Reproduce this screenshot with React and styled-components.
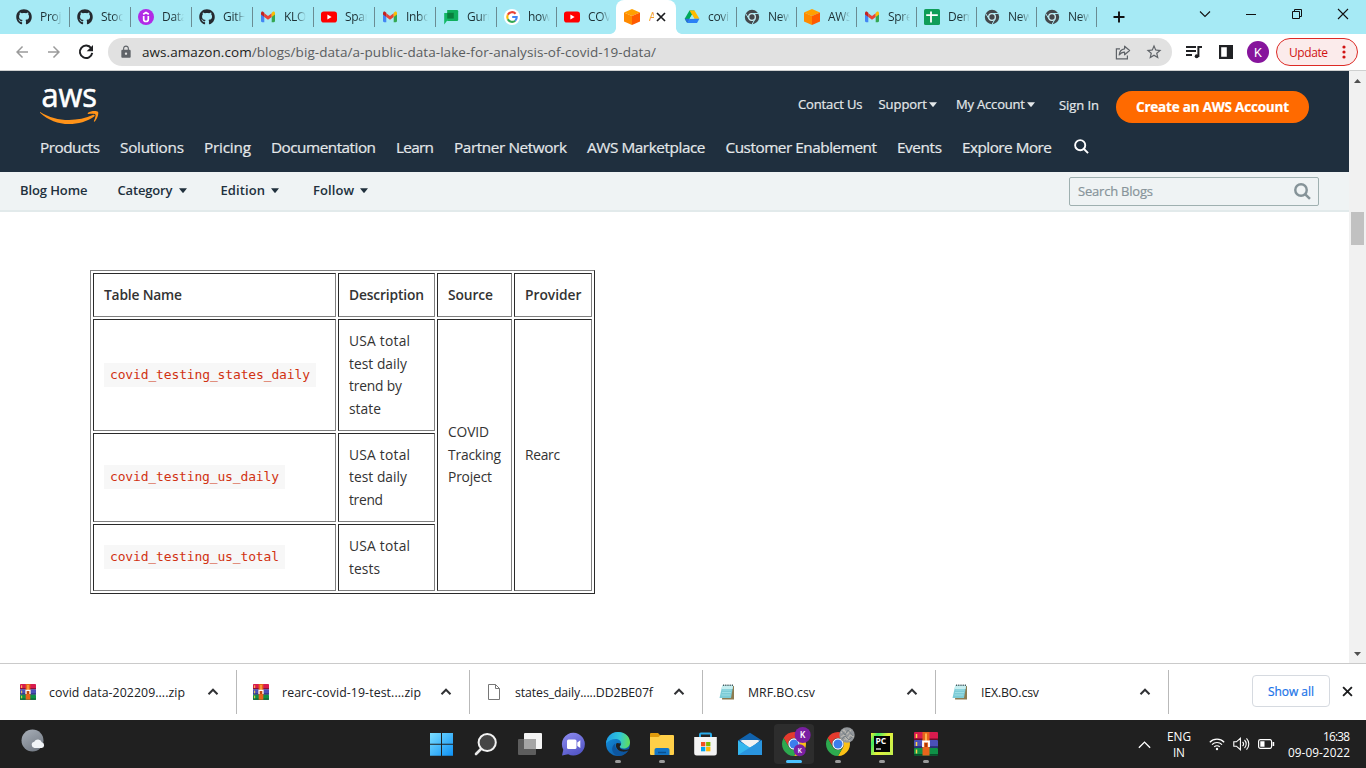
import React, { useLayoutEffect, useRef } from "react";
import styled, { createGlobalStyle } from "styled-components";
import { FaGithub } from "react-icons/fa";
import { MdArrowBack, MdArrowForward, MdLock, MdStarBorder } from "react-icons/md";

const Global = createGlobalStyle`
  * { box-sizing: border-box; }
  body { margin: 0; overflow: hidden; background: #fff; }
  svg { display: block; flex: none; }
`;

const UI = `"Open Sans", "Noto Sans", sans-serif`;

/* ---------- text that is tracked to a given measure ---------- */
const TextSpan = styled.span`
  display: inline-block;
  white-space: pre;
`;

function Fit({ w, children }) {
  const ref = useRef(null);
  useLayoutEffect(() => {
    const el = ref.current;
    el.style.letterSpacing = "0px";
    const natural = el.getBoundingClientRect().width;
    const n = el.textContent.length;
    const ls = (w - natural) / Math.max(1, n - 1);
    el.style.letterSpacing = `${ls}px`;
    el.style.marginRight = `${-ls}px`;
  }, [w, children]);
  return <TextSpan ref={ref}>{children}</TextSpan>;
}

/* ---------- window ---------- */
const Screen = styled.div`
  width: 1366px;
  height: 768px;
  display: flex;
  flex-direction: column;
  overflow: hidden;
  font-family: ${UI};
  color: #202124;
`;

const TabStrip = styled.div`
  height: 34px;
  flex: none;
  display: flex;
  background: #a6eaf5;
  padding-left: 8px;
`;

const Tab = styled.div`
  position: relative;
  flex: none;
  width: ${(p) => p.$w || 60}px;
  height: 34px;
  display: flex;
  align-items: center;
  padding-left: 8px;
  background: ${(p) => (p.$active ? "#fff" : "transparent")};
  border-radius: ${(p) => (p.$active ? "8px 8px 0 0" : "0")};
  ${(p) =>
    p.$divider &&
    `&::before {
      content: "";
      position: absolute;
      left: 0;
      top: 7px;
      width: 1px;
      height: 20px;
      background: #6a8c93;
    }`}
  ${(p) =>
    p.$active &&
    `&::before, &::after {
      content: "";
      position: absolute;
      bottom: 0;
      width: 6px;
      height: 6px;
    }
    &::before { left: -6px; background: radial-gradient(circle at 0 0, transparent 5.5px, #fff 6.2px); }
    &::after { right: -6px; background: radial-gradient(circle at 100% 0, transparent 5.5px, #fff 6.2px); }`}
`;

const StripEnd = styled.div`
  width: 1px;
  height: 20px;
  margin-top: 7px;
  background: #6a8c93;
`;

const TabTitle = styled.span`
  margin-left: ${(p) => (p.$short ? 9 : 8)}px;
  width: ${(p) => (p.$short ? 5 : 22)}px;
  overflow: hidden;
  white-space: pre;
  font-size: 12px;
  letter-spacing: -0.3px;
  line-height: 18px;
  color: ${(p) => (p.$short ? "#f29a2e" : "#1d3034")};
  mask-image: ${(p) => (p.$short ? "none" : "linear-gradient(90deg, #000 55%, transparent 100%)")};
`;

const TabClose = styled.svg`
  margin-left: 2px;
`;

const NewTab = styled.svg`
  align-self: center;
  margin-left: 15px;
`;

const WindowButtons = styled.div`
  margin-left: auto;
  display: flex;
  padding-top: 6px;
  svg { width: 46px; height: 16px; }
`;

const Toolbar = styled.div`
  height: 37px;
  flex: none;
  display: flex;
  align-items: center;
  border-bottom: 1px solid #cfd0d0;
  background: #fff;
  padding-left: 13px;
`;

const NavButtons = styled.div`
  display: flex;
  gap: 14px;
  width: 95px;
  svg { width: 18px; height: 18px; }
`;

const Omnibox = styled.div`
  width: 1064px;
  height: 28px;
  border-radius: 14px;
  background: #e1e1e1;
  display: flex;
  align-items: center;
  padding: 0 9px 0 11px;
  color: #5f6368;
`;

const Url = styled.div`
  margin-left: 9px;
  font-size: 13.5px;
  line-height: 20px;
  color: #5a5d60;
  b { font-weight: 400; color: #1d1e20; }
`;

const OmniboxActions = styled.div`
  margin-left: auto;
  display: flex;
  align-items: center;
  gap: 13px;
`;

const Avatar = styled.div`
  width: 22px;
  height: 22px;
  border-radius: 50%;
  background: #86149c;
  color: #fff;
  display: flex;
  align-items: center;
  justify-content: center;
  font: 400 12.5px Roboto, sans-serif;
`;

const ToolbarItem = styled.div`
  display: flex;
  align-items: center;
  margin-left: ${(p) => p.$left}px;
`;

const UpdateButton = styled.div`
  margin-left: 7px;
  width: 82px;
  height: 28px;
  border: 1px solid #dd2a25;
  border-radius: 14px;
  background: #fbebeb;
  color: #d01313;
  display: flex;
  align-items: center;
  padding-left: 12px;
  font-size: 12px;
  svg { margin-left: 14px; }
`;

/* ---------- page ---------- */
const Viewport = styled.div`
  height: 592px;
  flex: none;
  display: flex;
`;

const Page = styled.div`
  width: 1349px;
  height: 592px;
  background: #fff;
`;

const Scrollbar = styled.div`
  width: 17px;
  background: #f1f1f1;
  display: flex;
  flex-direction: column;
  align-items: center;
  padding: 8px 0 7px;
`;

const Thumb = styled.div`
  width: 13px;
  height: 33px;
  margin: 129px 0 auto;
  background: #c1c1c1;
`;

const SiteHeader = styled.header`
  height: 101px;
  background: #1f2f3e;
  color: #e4e8ea;
  display: flex;
  flex-direction: column;
`;

const HeaderTop = styled.div`
  height: 54px;
  flex: none;
  display: flex;
  padding: 16px 40px 0 40px;
`;

const AccountLinks = styled.div`
  margin-left: auto;
  display: flex;
  align-items: flex-start;
  font-size: 13px;
  -webkit-text-stroke: 0.2px;
  line-height: 18px;
`;

const AccountLink = styled.span`
  display: flex;
  align-items: center;
  gap: 2px;
  margin: ${(p) => p.$top || 8}px ${(p) => p.$right}px 0 0;
`;

const CreateButton = styled.div`
  width: 193px;
  height: 32px;
  margin-top: 4px;
  border-radius: 16px;
  background: #ff6a00;
  color: #fff;
  display: flex;
  align-items: center;
  justify-content: center;
  font-size: 13.5px;
  font-weight: 700;
`;

const MainNav = styled.nav`
  display: flex;
  align-items: center;
  gap: 20px;
  padding-left: 40px;
  height: 43px;
  font-size: 15.3px;
  -webkit-text-stroke: 0.2px;
  line-height: 22px;
`;

const SearchSlot = styled.span`
  margin-left: 2px;
`;

const SubNav = styled.div`
  height: 40px;
  background: #eff3f4;
  border-bottom: 2px solid #e2eaeb;
  display: flex;
  align-items: center;
  padding: 0 30px 0 20px;
  color: #21303d;
  font-size: 13px;
  font-weight: 600;
`;

const SubLink = styled.span`
  display: flex;
  align-items: center;
  gap: 6px;
  margin: 0 ${(p) => p.$right}px 2px 0;
`;

const SearchBox = styled.div`
  margin-left: auto;
  width: 250px;
  height: 29px;
  border: 1px solid #9fb0b0;
  border-radius: 2px;
  display: flex;
  align-items: center;
  justify-content: space-between;
  padding: 0 7px 0 8px;
  color: #87949a;
  font-size: 13px;
  font-weight: 400;
  -webkit-text-stroke: 0.2px;
`;

const DataTable = styled.table`
  margin: 58px 0 0 90px;
  width: 505px;
  height: 324px;
  table-layout: fixed;
  border: 1px solid;
  border-color: #808080 #2a2a2a #2a2a2a #808080;
  border-collapse: separate;
  border-spacing: 2px;
  font-size: 13.8px;
  line-height: 22.4px;
  color: #333;
`;

const Cell = styled.td`
  width: ${(p) => p.$w}px;
  height: ${(p) => p.$h}px;
  padding: 0 0 0 10px;
  text-align: left;
  vertical-align: middle;
  font-weight: ${(p) => (p.$head ? 600 : 400)};
  border: 1px solid;
  border-color: #2a2a2a #808080 #808080 #2a2a2a;
`;

const Line = styled.div`
  height: 22.5px;
`;

const Code = styled.code`
  display: block;
  width: fit-content;
  margin-bottom: 1px;
  background: #f7f7f7;
  color: #d13212;
  padding: 0 6px;
  height: 24px;
  line-height: 23px;
  font-family: "DejaVu Sans Mono", "Liberation Mono", monospace;
  font-size: 13px;
`;

/* ---------- downloads shelf ---------- */
const Shelf = styled.div`
  height: 57px;
  flex: none;
  border-top: 1px solid #cacaca;
  background: #fff;
  display: flex;
  align-items: center;
`;

const Download = styled.div`
  width: 233px;
  height: 44px;
  display: flex;
  align-items: center;
  padding-left: 20px;
  position: relative;
  &::after {
    content: "";
    position: absolute;
    right: -4px;
    top: 0;
    width: 1px;
    height: 44px;
    background: #b9b9b9;
  }
`;

const FileName = styled.span`
  margin-left: 13px;
  font-size: 12.3px;
  width: 158px;
  color: #202124;
`;

const ShowAll = styled.div`
  margin-left: 87px;
  margin-bottom: 2px;
  width: 78px;
  height: 32px;
  border: 1px solid #d6dae0;
  border-radius: 4px;
  color: #1a73e8;
  display: flex;
  align-items: center;
  justify-content: center;
  font-size: 12px;
  -webkit-text-stroke: 0.2px;
`;

const ShelfClose = styled.svg`
  margin: 0 0 2px 12px;
`;

/* ---------- taskbar ---------- */
const Taskbar = styled.div`
  height: 48px;
  flex: none;
  display: flex;
  background: #202020;
  color: #fff;
  padding: 0 16px 0 21px;
`;

const Weather = styled.div`
  width: 399px;
  padding-top: 8px;
`;

const AppButton = styled.div`
  width: 40px;
  height: 40px;
  margin: 4px 2px;
  border-radius: 4px;
  display: flex;
  flex-direction: column;
  align-items: center;
  padding-top: 8px;
  background: ${(p) => (p.$active ? "#2d2d2d" : "transparent")};
  svg { overflow: visible; }
  &::after {
    content: "";
    margin-top: 4px;
    width: ${(p) => (p.$active ? 16 : 6)}px;
    height: 3px;
    border-radius: 2px;
    background: ${(p) => (p.$active ? "#4cc2ff" : p.$running ? "#9a9a9a" : "transparent")};
  }
`;

const Tray = styled.div`
  margin-left: auto;
  display: flex;
  align-items: center;
`;

const TrayText = styled.div`
  display: flex;
  flex-direction: column;
  align-items: ${(p) => p.$align};
  margin-left: ${(p) => p.$left || 0}px;
  font-size: 11.8px;
  line-height: 16px;
`;

const TrayGlyphs = styled.div`
  display: flex;
  align-items: center;
  gap: 8px;
  margin: 0 13px 0 18px;
`;

/* ---------- icons ---------- */
const Github = () => <FaGithub size={16} color="#24292f" />;

const Udemy = () => (
  <svg width="16" height="16" viewBox="0 0 16 16">
    <circle cx="8" cy="8" r="8" fill="#b12ae6" />
    <path d="M5.2 5.3 8 3.5l2.8 1.8M5.7 7v3.2a2.3 2.3 0 0 0 4.6 0V7" fill="none" stroke="#fff" strokeWidth="1.7" />
  </svg>
);

const Gmail = () => (
  <svg width="16" height="16" viewBox="0 0 16 16">
    <path d="M1 4.4 4.3 7v6.2H2.1A1.1 1.1 0 0 1 1 12.1z" fill="#4285f4" />
    <path d="M15 4.4 11.7 7v6.2h2.2a1.1 1.1 0 0 0 1.1-1.1z" fill="#34a853" />
    <path d="M4.3 4.3 8 7.1l3.7-2.8V8L8 10.8 4.3 8z" fill="#ea4335" />
    <path d="M1 4.2c0-1.5 1.4-2 2.4-1.2l.9.8V8L1 5.6z" fill="#c5221f" />
    <path d="M15 4.2c0-1.5-1.4-2-2.4-1.2l-.9.8V8L15 5.6z" fill="#fbbc04" />
  </svg>
);

const Youtube = () => (
  <svg width="16" height="16" viewBox="0 0 16 16">
    <rect y="2.4" width="16" height="11.2" rx="2.8" fill="#f00" />
    <path d="m6.4 5.6 4.2 2.4-4.2 2.4z" fill="#fff" />
  </svg>
);

const Chat = () => (
  <svg width="16" height="16" viewBox="0 0 16 16">
    <path d="M4.2 1H14a1.2 1.2 0 0 1 1.2 1.2v8.6A1.2 1.2 0 0 1 14 12H4.2z" fill="#0fae5c" />
    <path d="M1.2 4H11v6.8H4.8L1.2 15.4z" fill="#12b866" />
    <path d="M4.2 3.8h6.6v5.8H4.2z" fill="#087f3e" />
  </svg>
);

const Google = () => (
  <svg width="16" height="16" viewBox="0 0 16 16">
    <circle cx="8" cy="8" r="8" fill="#fff" />
    <g fill="none" strokeWidth="2.1">
      <path d="M11.6 4.7A4.8 4.8 0 0 0 3.8 5.8" stroke="#ea4335" />
      <path d="M3.8 5.8a4.9 4.9 0 0 0 0 4.4" stroke="#fbbc05" />
      <path d="M3.8 10.2a4.8 4.8 0 0 0 7.4 1.5" stroke="#34a853" />
      <path d="M11.2 11.7A4.6 4.6 0 0 0 12.7 8H8.2" stroke="#4285f4" />
    </g>
  </svg>
);

const AwsCube = () => (
  <svg width="16" height="16" viewBox="0 0 16 16">
    <path d="m8 0 8 3.5L8 7 0 3.5z" fill="#ffa000" />
    <path d="M0 3.5 8 7v9l-8-3.6z" fill="#ff8a00" />
    <path d="M16 3.5 8 7v9l8-3.6z" fill="#ff5a00" />
  </svg>
);

const Drive = () => (
  <svg width="16" height="16" viewBox="0 0 16 16">
    <path d="M5.5 1.5h5L8 5.8 3.2 14 .7 9.8z" fill="#00a85a" />
    <path d="M5.5 1.5h5l4.9 8.3h-5z" fill="#ffba00" />
    <path d="M5.6 9.8h9.8L13 14H3.2z" fill="#2a80f5" />
    <path d="M.7 9.8h4.9L3.2 14z" fill="#2a6be0" />
    <path d="M8 5.8 10.4 9.8H5.6z" fill="#a6eaf5" />
  </svg>
);

const ChromeDark = () => (
  <svg width="16" height="16" viewBox="0 0 48 48">
    <circle cx="24" cy="24" r="21.5" fill="#43484c" />
    <circle cx="24" cy="24" r="10" fill="none" stroke="#cfeef3" strokeWidth="4" />
    <path d="M24 13.5h19M14.5 29.5 5.5 14M33.5 29.5 24 46" stroke="#a6eaf5" strokeWidth="3" />
  </svg>
);

const Sheet = () => (
  <svg width="16" height="16" viewBox="0 0 16 16">
    <rect width="16" height="16" rx="1.6" fill="#0f9d58" />
    <path d="M2.2 6.2h11.6M7 2.6v11" stroke="#fff" strokeWidth="1.8" />
  </svg>
);

const Reload = () => (
  <svg viewBox="0 0 18 18">
    <path d="M14.2 5.3A6.2 6.2 0 1 0 15.2 9.8" fill="none" stroke="#202124" strokeWidth="2" />
    <path d="M16 2v6.3H9.7z" fill="#202124" />
  </svg>
);

const Cross = ({ as: Tag = "svg", size }) => (
  <Tag width={size} height={size} viewBox="0 0 10 10" fill="none" stroke="#1b1c1e" strokeWidth="1.7">
    <path d="m1 1 8 8M9 1 1 9" />
  </Tag>
);

const Share = () => (
  <svg width="18" height="18" viewBox="0 0 18 18" fill="none" stroke="#5f6368" strokeWidth="1.2">
    <path d="M6 5.8H2.4v10h11v-3.2" />
    <path d="M10.6 3.2v2.6C7 6.3 5.4 8.8 5.2 12c1.4-2 3-2.8 5.4-2.8v2.6l5-4.3z" strokeLinejoin="round" />
  </svg>
);

const MediaQueue = () => (
  <svg width="18" height="16" viewBox="0 0 18 16" fill="none" stroke="#202124" strokeWidth="2">
    <path d="M1 3h10M1 7h10M1 11h6M13.4 13V3H17" />
    <circle cx="11.7" cy="12.3" r="2" fill="#202124" stroke="none" />
  </svg>
);

const SidePanel = () => (
  <svg width="14" height="14" viewBox="0 0 14 14">
    <path d="M0 0h14v14H0zM2.2 2.2v9.6h5.6V2.2z" fill="#202124" fillRule="evenodd" />
  </svg>
);

const Dots = () => (
  <svg width="4" height="14" viewBox="0 0 4 14" fill="#d01313">
    <circle cx="2" cy="2" r="1.6" />
    <circle cx="2" cy="7" r="1.6" />
    <circle cx="2" cy="12" r="1.6" />
  </svg>
);

const Caret = ({ w = 8, color = "currentColor" }) => (
  <svg width={w} height="5" viewBox="0 0 8 5">
    <path d="M0 .3h8L4.6 4.6a.8.8 0 0 1-1.2 0z" fill={color} />
  </svg>
);

const Magnifier = ({ size, color, sw = 2 }) => (
  <svg width={size} height={size} viewBox="0 0 16 16" fill="none" stroke={color} strokeWidth={sw}>
    <circle cx="6.6" cy="6.6" r="5.4" />
    <path d="m10.4 10.4 4.6 4.6" />
  </svg>
);

const AwsLogo = () => (
  <svg width="60" height="38" viewBox="0 0 60 38">
    <text x="1.5" y="20" textLength="55.5" lengthAdjust="spacingAndGlyphs" fontFamily="Open Sans, Noto Sans, sans-serif" fontSize="32" fill="#fff" stroke="#fff" strokeWidth=".6">aws</text>
    <path d="M.2 24.9C9 30.3 18.5 33 29 33c8 0 17-1.8 24.3-5.2 1.1-.5 2 .8.9 1.6C47.5 34.3 38 37 29 37 18 37 8 32.8.3 25.9c-.5-.6-.4-1.2-.1-1z" fill="#ff9319" />
    <path d="M48 25.7c2.4-1.9 8.5-2.5 10-.9 1 1.4-.6 7.2-3.3 9.7-.5.4-1 .2-.8-.4.8-1.9 2.2-5.6 1.5-6.6-.8-1-4.9-.7-6.9-.5-.8.1-1.1-.8-.5-1.3z" fill="#ff9319" />
  </svg>
);

/* stacked books held by a strap */
const WinrarFile = ({ size }) => (
  <svg width={size} height={size} viewBox="0 0 24 24">
    <rect x="0" y="0" width="24" height="8" rx="1" fill="#d81b4e" />
    <rect x="0" y="6.5" width="24" height="1.5" fill="#6d0d2b" />
    <rect x="0" y="8" width="24" height="8" rx="1" fill="#4b50b8" />
    <rect x="0" y="14.3" width="24" height="1.5" fill="#222a63" />
    <rect x="0" y="16" width="24" height="7.5" rx="1" fill="#0f9146" />
    <rect x="0" y="22" width="24" height="1.5" fill="#07502a" />
    <path d="M2.5 2v4M2.5 10v4M2.5 17.5v4" stroke="#ffd34d" strokeWidth="1.5" />
    <rect x="8.5" y="0" width="7" height="23.5" fill="#e8641b" />
    <path d="M12 1.5v8" stroke="#ffb24a" strokeWidth="2" />
    <path d="M9 15V9.500h6V15" fill="none" stroke="#fff" strokeWidth="1.8" />
    <path d="M12 11v4" stroke="#a8380b" strokeWidth="2" />
  </svg>
);

const BlankFile = () => (
  <svg width="16" height="16" viewBox="0 0 16 16">
    <path d="M2.5.5h7l4 4v11h-11zM9.5.5v4h4" fill="#fff" stroke="#777" />
  </svg>
);

const Notepad = () => (
  <svg width="16" height="16" viewBox="0 0 16 16">
    <path d="M4 2h11v13.5H3z" fill="#8c7b50" />
    <path d="M3.3 1.5h10.900L12 14H.5z" fill="#7ccbd6" />
    <path d="M3.3 1.5h10.900l-.6 3.500H2.500z" fill="#c5eef0" />
    <path d="M3.5 6h9M3 8.500h9M2.500 11h9" stroke="#a6e2e8" strokeWidth=".8" />
    <path d="M4 1.2h10" stroke="#45595c" strokeWidth="1.6" strokeDasharray="1.2 1" />
  </svg>
);

const ChevronUp = ({ size = 12, color = "#303134", sw = 2 }) => (
  <svg width={size} height={size * 0.6} viewBox="0 0 12 7.2" fill="none" stroke={color} strokeWidth={sw}>
    <path d="m1.5 6.2 4.5-4.5 4.5 4.5" />
  </svg>
);

const WeatherIcon = () => (
  <svg width="26" height="26" viewBox="0 0 26 26">
    <defs>
      <linearGradient id="moon" x1="0" y1="0" x2=".6" y2="1">
        <stop offset="0" stopColor="#a9b0b9" />
        <stop offset="1" stopColor="#767d87" />
      </linearGradient>
    </defs>
    <circle cx="11.5" cy="12.5" r="11" fill="url(#moon)" />
    <path d="M13.5 20a3.2 3.2 0 0 1-.3-6.3 4.2 4.2 0 0 1 7.6.6A2.9 2.9 0 0 1 20.7 20z" fill="#f1f4f7" />
  </svg>
);

const Start = () => (
  <svg width="24" height="24" viewBox="0 0 24 24">
    <defs>
      <linearGradient id="win" gradientUnits="userSpaceOnUse" x1="0" y1="0" x2="24" y2="24">
        <stop offset="0" stopColor="#7fe0ff" />
        <stop offset="1" stopColor="#0a8ff5" />
      </linearGradient>
    </defs>
    <path d="M0 1h11v10.8H0zM12 1h11v10.8H12zM0 12.8h11v10.900H0zM12 12.8h11v10.900H12z" fill="url(#win)" />
  </svg>
);

const TaskSearch = () => (
  <svg width="24" height="24" viewBox="0 0 24 24">
    <path d="m7.5 16.5-5.5 5.5" stroke="#e8e8e8" strokeWidth="2.6" strokeLinecap="round" />
    <circle cx="13.2" cy="10.5" r="8.6" fill="#454545" stroke="#f2f2f2" strokeWidth="2" />
  </svg>
);

const TaskView = () => (
  <svg width="24" height="24" viewBox="0 0 24 24">
    <rect x="6" y="1" width="18" height="16" rx="1" fill="#f4f4f4" />
    <rect x="0" y="7" width="18" height="16" rx="1" fill="#5d5d5d" />
    <rect x="6" y="7" width="12" height="10" fill="#a5a5a5" />
  </svg>
);

const TeamsChat = () => (
  <svg width="24" height="24" viewBox="0 0 24 24">
    <defs>
      <linearGradient id="chat" x1="0" y1="0" x2=".5" y2="1">
        <stop offset="0" stopColor="#8f8cf0" />
        <stop offset="1" stopColor="#5558c8" />
      </linearGradient>
    </defs>
    <path d="M11.5.8a11.4 11.4 0 1 1-5.3 21.5L0 23.5l1.3-5.8A11.4 11.4 0 0 1 11.5.8z" fill="url(#chat)" />
    <rect x="5" y="7.5" width="9.5" height="9.5" rx="1.5" fill="#fff" />
    <path d="m15.3 10.5 3-2.2v7.8l-3-2.2z" fill="#fff" />
  </svg>
);

const Edge = () => (
  <svg width="24" height="24" viewBox="0 0 24 24">
    <defs>
      <linearGradient id="edgeTop" x1="0" y1=".4" x2="1" y2=".5">
        <stop offset="0" stopColor="#1e9de8" />
        <stop offset=".55" stopColor="#2fc6d9" />
        <stop offset="1" stopColor="#62df57" />
      </linearGradient>
      <linearGradient id="edgeLow" x1="0" y1="0" x2="1" y2="1">
        <stop offset="0" stopColor="#1494e0" />
        <stop offset="1" stopColor="#0c4f9e" />
      </linearGradient>
    </defs>
    <circle cx="12" cy="12" r="12" fill="url(#edgeLow)" />
    <path d="M0 11.5C.6 4.8 5.7 0 12 0c7 0 12 4.7 12 10.2 0 3.8-2.7 6.3-6.2 6.3-2.6 0-4-.9-4-1.9 0-.7 1.4-1.1 1.4-3.2 0-2.5-2.4-4.500-5.700-4.500C5.8 6.9 2 8.700 0 11.500z" fill="url(#edgeTop)" />
    <path d="M9.3 11.6c-1.2 6.7 6 10.7 13 6.5C20.5 21.7 17 24 12.5 24 5 22.5 4.5 14.5 9.3 11.6z" fill="#0d569f" />
    <path d="M10.8 11c-2 2.6-.6 7.5 5.2 8.6 2.6.4 5-.4 6.8-1.5.5-.3.2-.9-.3-.8-5.5 1.4-8.800-.4-8.800-2.600 0-.7 1.100-1.300 1.100-3.100" fill="#202020" />
  </svg>
);

const Folder = () => (
  <svg width="24" height="24" viewBox="0 0 24 24">
    <path d="M0 2a1 1 0 0 1 1-1h7l2.5 2.5H20v4H0z" fill="#e09b0c" />
    <path d="M0 5h8.5L10.6 3H23a1 1 0 0 1 1 1v18a1 1 0 0 1-1 1H1a1 1 0 0 1-1-1z" fill="#ffcf48" />
    <path d="M4.5 23v-5a2 2 0 0 1 2-2h11a2 2 0 0 1 2 2v5z" fill="#1275c6" />
    <path d="M8 20.5h8" stroke="#0a4f8e" strokeWidth="1.5" />
  </svg>
);

const Store = () => (
  <svg width="24" height="24" viewBox="0 0 24 24">
    <path d="M6 7V2.5a1 1 0 0 1 1-1h9a1 1 0 0 1 1 1V7" fill="none" stroke="#27a9e8" strokeWidth="2" />
    <path d="M.2 5h22.6v16a2.5 2.5 0 0 1-2.5 2.5H2.7A2.5 2.5 0 0 1 .2 21z" fill="#f3f3f3" />
    <path d="M7 10h4.3v4.3H7z" fill="#f25022" />
    <path d="M12.1 10h4.3v4.3h-4.3z" fill="#7fba00" />
    <path d="M7 15h4.3v4.3H7z" fill="#00a4ef" />
    <path d="M12.1 15h4.3v4.3h-4.3z" fill="#ffb900" />
  </svg>
);

const Mail = () => (
  <svg width="24" height="24" viewBox="0 0 24 24">
    <path d="M0 8.5 12 .8l12 7.7v7H0z" fill="#1062ac" />
    <path d="M2 8.5h20l-10 8z" fill="#f2f2f2" />
    <path d="M0 8.5l12 7 12-7V23H0z" fill="#35b7ee" />
    <path d="M0 23l12-7.5L24 8.5V23z" fill="#2a95df" />
    <path d="M3 8h18l-9 6.6z" fill="#f2f2f2" />
  </svg>
);

const ChromeParts = () => (
  <>
    <path d="M1.61 6A12 12 0 0 1 22.39 6H12A6 6 0 0 0 6.8 15z" fill="#e33b2e" />
    <path d="M22.39 6A12 12 0 0 1 12 24L17.2 15A6 6 0 0 0 12 6z" fill="#fbc116" />
    <path d="M12 24A12 12 0 0 1 1.61 6L6.8 15A6 6 0 0 0 17.2 15z" fill="#2da94f" />
    <circle cx="12" cy="12" r="5.7" fill="#fff" />
    <circle cx="12" cy="12" r="4.5" fill="#3b7ded" />
  </>
);

const ChromeProfile = () => (
  <svg width="24" height="24" viewBox="0 0 24 24" fontFamily="Roboto, sans-serif" fontWeight="500" fill="#fff" textAnchor="middle">
    <ChromeParts />
    <circle cx="20.7" cy="3" r="8" fill="#7a1fa2" />
    <text x="20.7" y="6" fontSize="8.5">K</text>
    <circle cx="17.7" cy="18.2" r="6" fill="#7a1fa2" />
    <text x="17.7" y="20.7" fontSize="6.5">K</text>
  </svg>
);

const ChromeGuest = () => (
  <svg width="24" height="24" viewBox="0 0 24 24">
    <ChromeParts />
    <circle cx="21" cy="3" r="7.7" fill="#92969a" />
    <path d="m15 1 3-3 3 4 4-4M15 5l3-2 3 5 3-5 4 2M18 8l3-2 3 3" fill="none" stroke="#b9b7b1" strokeWidth="1.2" />
    <path d="m16-1 3 4 3-5 5 6M16 7l3-3 4 4 3-3" fill="none" stroke="#70797e" strokeWidth=".8" />
  </svg>
);

const PyCharm = () => (
  <svg width="24" height="24" viewBox="0 0 24 24">
    <defs>
      <linearGradient id="py" x1="0" y1="0" x2="1" y2=".6">
        <stop offset="0" stopColor="#f4ef2e" />
        <stop offset=".25" stopColor="#3dea62" />
        <stop offset=".6" stopColor="#e6f23a" />
        <stop offset="1" stopColor="#c8f04c" />
      </linearGradient>
    </defs>
    <rect x="1" y="1" width="22" height="22" fill="url(#py)" />
    <rect x="4" y="4" width="16" height="16" fill="#050505" />
    <text x="5.5" y="12" fontFamily="Open Sans, sans-serif" fontWeight="700" fontSize="8.5" fill="#fff">PC</text>
    <path d="M6 17h5" stroke="#fff" strokeWidth="1.2" />
  </svg>
);

const Wifi = () => (
  <svg width="16" height="14" viewBox="0 0 16 14" fill="none" stroke="#fff" strokeWidth="1.2">
    <path d="M.8 5.2a10.2 10.2 0 0 1 14.4 0M3 7.6a7 7 0 0 1 10 0M5.2 9.9a4 4 0 0 1 5.6 0" />
    <circle cx="8" cy="12" r="1.2" fill="#fff" stroke="none" />
  </svg>
);

const Speaker = () => (
  <svg width="17" height="14" viewBox="0 0 17 14" fill="none" stroke="#fff" strokeWidth="1.1">
    <path d="M.8 4.8h2.6L7.4 1.3v11.4L3.4 9.2H.8zM9.6 4.8a3.2 3.2 0 0 1 0 4.4M11.5 3a5.6 5.6 0 0 1 0 8M13.5 1.3a8.2 8.2 0 0 1 0 11.4" />
  </svg>
);

const Battery = () => (
  <svg width="17" height="12" viewBox="0 0 17 12">
    <rect x=".6" y="1.6" width="13" height="8.8" rx="1.8" fill="none" stroke="#fff" strokeWidth="1.2" />
    <path d="M2.3 3.3h4.2v5.4H2.3zM14.6 4h1.6v4h-1.6z" fill="#fff" />
  </svg>
);

/* ---------- data ---------- */
const tabs = [
  { icon: Github, title: "Proj", w: 61 },
  { icon: Github, title: "Stoc", w: 61 },
  { icon: Udemy, title: "Data", w: 61 },
  { icon: Github, title: "GitH", w: 61 },
  { icon: Gmail, title: "KLO", w: 61 },
  { icon: Youtube, title: "Spar", w: 61 },
  { icon: Gmail, title: "Inbo", w: 61 },
  { icon: Chat, title: "Guru", w: 61 },
  { icon: Google, title: "how" },
  { icon: Youtube, title: "COV" },
  { icon: AwsCube, title: "A", active: true },
  { icon: Drive, title: "covi" },
  { icon: ChromeDark, title: "New" },
  { icon: AwsCube, title: "AWS" },
  { icon: Gmail, title: "Spre" },
  { icon: Sheet, title: "Dem" },
  { icon: ChromeDark, title: "New" },
  { icon: ChromeDark, title: "New" },
];

const navItems = [
  ["Products", 60], ["Solutions", 64], ["Pricing", 47], ["Documentation", 105], ["Learn", 38],
  ["Partner Network", 113], ["AWS Marketplace", 118.5], ["Customer Enablement", 151.5], ["Events", 45], ["Explore More", 90],
];

const downloads = [
  [WinrarFile, "covid data-202209....zip", 136],
  [WinrarFile, "rearc-covid-19-test....zip", 139],
  [BlankFile, "states_daily.....DD2BE07f", 138],
  [Notepad, "MRF.BO.csv", 67],
  [Notepad, "IEX.BO.csv", 58],
];

const apps = [
  { icon: Start }, { icon: TaskSearch }, { icon: TaskView }, { icon: TeamsChat },
  { icon: Edge, running: true }, { icon: Folder, running: true }, { icon: Store }, { icon: Mail },
  { icon: ChromeProfile, active: true }, { icon: ChromeGuest, running: true },
  { icon: PyCharm, running: true }, { icon: WinrarFile, running: true },
];

const Lines = ({ items }) => items.map(([t, w]) => <Line key={t}><Fit w={w}>{t}</Fit></Line>);

export default function App() {
  return (
    <Screen>
      <Global />
      <TabStrip>
        {tabs.map(({ icon: Icon, title, w, active }, i) => (
          <Tab key={i} $w={w} $active={active} $divider={i > 0 && !active && !tabs[i - 1].active}>
            <Icon />
            <TabTitle $short={active}>{title}</TabTitle>
            {active && <Cross as={TabClose} size={10} />}
          </Tab>
        ))}
        <StripEnd />
        <NewTab width="14" height="14" viewBox="0 0 14 14"><path d="M7 1.5v11M1.5 7h11" stroke="#111" strokeWidth="1.9" /></NewTab>
        <WindowButtons>
          <svg viewBox="0 0 46 16" fill="none" stroke="#111" strokeWidth="1.1"><path d="m18 5.5 5 5 5-5" /></svg>
          <svg viewBox="0 0 46 16" fill="none" stroke="#111"><path d="M18 8.5h10" /></svg>
          <svg viewBox="0 0 46 16" fill="none" stroke="#111"><path d="M18.5 5.5h7v7h-7zM20.5 5.5v-2h7v7h-2" /></svg>
          <svg viewBox="0 0 46 16" fill="none" stroke="#111" strokeWidth="1.1"><path d="m18 3 10 10M28 3 18 13" /></svg>
        </WindowButtons>
      </TabStrip>

      <Toolbar>
        <NavButtons>
          <MdArrowBack color="#9b9b9b" />
          <MdArrowForward color="#9b9b9b" />
          <Reload />
        </NavButtons>
        <Omnibox>
          <MdLock size={14} />
          <Url><Fit w={514}><b>aws.amazon.com</b>/blogs/big-data/a-public-data-lake-for-analysis-of-covid-19-data/</Fit></Url>
          <OmniboxActions>
            <Share />
            <MdStarBorder size={18} />
          </OmniboxActions>
        </Omnibox>
        <ToolbarItem $left={13}><MediaQueue /></ToolbarItem>
        <ToolbarItem $left={16}><SidePanel /></ToolbarItem>
        <ToolbarItem $left={14}><Avatar>K</Avatar></ToolbarItem>
        <UpdateButton><Fit w={39}>Update</Fit><Dots /></UpdateButton>
      </Toolbar>

      <Viewport>
        <Page>
          <SiteHeader>
            <HeaderTop>
              <AwsLogo />
              <AccountLinks>
                <AccountLink $right={16}><Fit w={64.5}>Contact Us</Fit></AccountLink>
                <AccountLink $right={19}><Fit w={48.5}>Support</Fit><Caret /></AccountLink>
                <AccountLink $right={24}><Fit w={69}>My Account</Fit><Caret /></AccountLink>
                <AccountLink $right={17} $top={9}><Fit w={40}>Sign In</Fit></AccountLink>
                <CreateButton><Fit w={153}>Create an AWS Account</Fit></CreateButton>
              </AccountLinks>
            </HeaderTop>
            <MainNav>
              {navItems.map(([t, w]) => <Fit key={t} w={w}>{t}</Fit>)}
              <SearchSlot><Magnifier size={15} color="#fff" /></SearchSlot>
            </MainNav>
          </SiteHeader>
          <SubNav>
            <SubLink $right={30}><Fit w={67.5}>Blog Home</Fit></SubLink>
            <SubLink $right={34}><Fit w={55}>Category</Fit><Caret /></SubLink>
            <SubLink $right={34}><Fit w={44.5}>Edition</Fit><Caret /></SubLink>
            <SubLink $right={0}><Fit w={41}>Follow</Fit><Caret /></SubLink>
            <SearchBox><Fit w={75}>Search Blogs</Fit><Magnifier size={17} color="#859398" sw={2.3} /></SearchBox>
          </SubNav>

          <DataTable>
            <tbody>
              <tr>
                <Cell as="th" $head $w={243} $h={44}><Fit w={78}>Table Name</Fit></Cell>
                <Cell as="th" $head $w={97} $h={44}><Fit w={75}>Description</Fit></Cell>
                <Cell as="th" $head $w={75} $h={44}><Fit w={45}>Source</Fit></Cell>
                <Cell as="th" $head $w={78} $h={44}><Fit w={56.5}>Provider</Fit></Cell>
              </tr>
              <tr>
                <Cell $h={112}><Code><Fit w={200}>covid_testing_states_daily</Fit></Code></Cell>
                <Cell><Lines items={[["USA total", 61], ["test daily", 58], ["trend by", 53], ["state", 32]]} /></Cell>
                <Cell rowSpan={3}><Lines items={[["COVID", 41], ["Tracking", 53], ["Project", 44]]} /></Cell>
                <Cell rowSpan={3}><Fit w={35}>Rearc</Fit></Cell>
              </tr>
              <tr>
                <Cell $h={89}><Code><Fit w={169}>covid_testing_us_daily</Fit></Code></Cell>
                <Cell><Lines items={[["USA total", 61], ["test daily", 58], ["trend", 34]]} /></Cell>
              </tr>
              <tr>
                <Cell $h={67}><Code><Fit w={169}>covid_testing_us_total</Fit></Code></Cell>
                <Cell><Lines items={[["USA total", 61], ["tests", 31]]} /></Cell>
              </tr>
            </tbody>
          </DataTable>
        </Page>
        <Scrollbar>
          <svg width="7" height="4" viewBox="0 0 7 4"><path d="M3.5 0 7 4H0z" fill="#505050" /></svg>
          <Thumb />
          <svg width="7" height="4" viewBox="0 0 7 4"><path d="M0 0h7L3.5 4z" fill="#505050" /></svg>
        </Scrollbar>
      </Viewport>

      <Shelf>
        {downloads.map(([Icon, name, w]) => (
          <Download key={name}>
            <Icon size={16} />
            <FileName><Fit w={w}>{name}</Fit></FileName>
            <ChevronUp />
          </Download>
        ))}
        <ShowAll><Fit w={46}>Show all</Fit></ShowAll>
        <Cross as={ShelfClose} size={11} />
      </Shelf>

      <Taskbar>
        <Weather><WeatherIcon /></Weather>
        {apps.map(({ icon: Icon, active, running }, i) => (
          <AppButton key={i} $active={active} $running={running}><Icon size={24} /></AppButton>
        ))}
        <Tray>
          <ChevronUp size={15} color="#fff" sw={1.1} />
          <TrayText $align="center" $left={15}><Fit w={24}>ENG</Fit><Fit w={12}>IN</Fit></TrayText>
          <TrayGlyphs><Wifi /><Speaker /><Battery /></TrayGlyphs>
          <TrayText $align="flex-end"><Fit w={27}>16:38</Fit><Fit w={62}>09-09-2022</Fit></TrayText>
        </Tray>
      </Taskbar>
    </Screen>
  );
}
